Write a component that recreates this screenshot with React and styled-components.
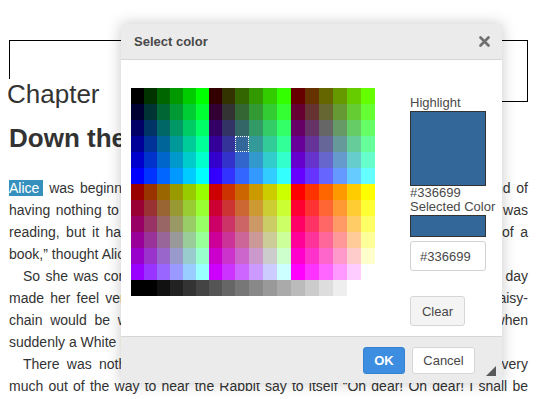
import React from "react";
import styled, { createGlobalStyle } from "styled-components";

const GlobalStyle = createGlobalStyle`
  html, body {
    margin: 0;
    padding: 0;
    background: #fff;
  }
  body {
    font-family: "Liberation Sans", Arial, sans-serif;
    color: #333;
    overflow: hidden;
  }
`;

const Page = styled.div`
  position: relative;
  width: 538px;
  height: 399px;
  overflow: hidden;
  box-sizing: border-box;
  padding: 40px 10px 0 9px;
`;

const Frame = styled.div`
  height: 60px;
  border: 1px solid #000;
`;

const Chapter = styled.h1`
  margin: -23px 0 0 -2px;
  width: 130px;
  background: #fff;
  font-size: 26px;
  font-weight: normal;
  line-height: 30px;
  color: #333;
`;

const Heading = styled.h2`
  margin: 14px 0 24px;
  font-size: 26px;
  font-weight: bold;
  line-height: 30px;
  color: #333;
`;

const Para = styled.p`
  margin: 0;
  font-size: 14px;
  line-height: 22px;
  text-align: justify;
  text-align-last: ${({ $breakJustify }) => ($breakJustify ? "justify" : "auto")};
  text-indent: ${({ $indent }) => ($indent ? "14px" : "0")};
  color: #333;
`;

const Mark = styled.span`
  background: #3590bd;
  color: #fff;
  padding-right: 4px;
`;

const Dialog = styled.div`
  position: absolute;
  left: 121px;
  top: 24px;
  width: 381px;
  background: #fff;
  box-shadow: 0 0 14px rgba(0, 0, 0, 0.22);
  display: flex;
  flex-direction: column;
`;

const TitleBar = styled.div`
  height: 35px;
  border-bottom: 1px solid #d6d6d6;
  background: #ebebeb;
  display: flex;
  align-items: center;
  justify-content: space-between;
  padding: 0 12px 0 13px;
  font-size: 13px;
  font-weight: bold;
  color: #484848;
`;

const CloseButton = styled.span`
  display: flex;
  width: 11px;
  height: 11px;
  margin-top: -1px;
`;

const Body = styled.div`
  height: 276px;
  box-sizing: border-box;
  padding: 28px 16px 0 10px;
  display: flex;
  justify-content: space-between;
  align-items: flex-start;
`;

const Palette = styled.div`
  display: grid;
  grid-template-columns: repeat(8, 13px) repeat(10, 14px);
  grid-auto-rows: 16px;
  width: 244px;
`;

const Cell = styled.div`
  background: ${({ $color }) => $color};
  outline: ${({ $selected }) => ($selected ? "1px dotted #fff" : "none")};
  outline-offset: -1px;
`;

const Side = styled.div`
  width: 76px;
  display: flex;
  flex-direction: column;
  padding-top: 7px;
  font-size: 13px;
  color: #4a4a4a;
`;

const Label = styled.div`
  line-height: ${({ $tight }) => ($tight ? "14px" : "15px")};
  white-space: nowrap;
`;

const Swatch = styled.div`
  height: ${({ $h }) => $h}px;
  margin-top: 1px;
  background: #336699;
  border: 1px solid #333;
  box-sizing: border-box;
`;

const HexInput = styled.div`
  margin-top: 4px;
  height: 30px;
  box-sizing: border-box;
  border: 1px solid #d1d1d1;
  border-radius: 3px;
  padding-left: 9px;
  display: flex;
  align-items: center;
  color: #474747;
`;

const ClearButton = styled.div`
  margin-top: 25px;
  width: 55px;
  height: 30px;
  box-sizing: border-box;
  border: 1px solid #d6d6d6;
  border-radius: 3px;
  background: #f4f4f4;
  display: flex;
  align-items: center;
  justify-content: center;
  color: #474747;
`;

const Footer = styled.div`
  position: relative;
  height: 36px;
  border-top: 1px solid #d6d6d6;
  background: #ebebeb;
  display: flex;
  justify-content: flex-end;
  align-items: flex-start;
  gap: 7px;
  padding: 10px 27px 0 0;
`;

const Button = styled.div`
  width: ${({ $primary }) => ($primary ? "42px" : "63px")};
  height: 27px;
  box-sizing: border-box;
  border-radius: 3px;
  display: flex;
  align-items: center;
  justify-content: center;
  font-size: 13px;
  font-weight: ${({ $primary }) => ($primary ? "bold" : "normal")};
  background: ${({ $primary }) => ($primary ? "#3d8de0" : "#fff")};
  border: 1px solid ${({ $primary }) => ($primary ? "#3583d3" : "#d6d6d6")};
  color: ${({ $primary }) => ($primary ? "#fff" : "#474747")};
`;

const Grip = styled.div`
  position: absolute;
  right: 6px;
  bottom: 7px;
  width: 0;
  height: 0;
  border-style: solid;
  border-width: 0 0 10px 10px;
  border-color: transparent transparent #595959 transparent;
`;

const hex = ["00", "33", "66", "99", "cc", "ff"];

function buildColors() {
  const out = [];
  for (let half = 0; half < 2; half++) {
    for (let b = 0; b < 6; b++) {
      for (let r = 0; r < 3; r++) {
        for (let g = 0; g < 6; g++) {
          out.push("#" + hex[half * 3 + r] + hex[g] + hex[b]);
        }
      }
    }
  }
  out.push("#000000");
  for (let n = 0; n < 16; n++) {
    const c = n.toString(16);
    out.push("#" + c + c + c + c + c + c);
  }
  return out;
}

const colors = buildColors();

function CloseIcon() {
  return (
    <svg width="11" height="11" viewBox="0 0 11 11">
      <path
        d="M1.5 1.5 L9.5 9.5 M9.5 1.5 L1.5 9.5"
        stroke="#6f6f6f"
        strokeWidth="2.6"
        strokeLinecap="round"
      />
    </svg>
  );
}

export default function App() {
  return (
    <>
      <GlobalStyle />
      <Page>
        <Frame />
        <Chapter>Chapter</Chapter>
        <Heading>Down the Rabbit-Hole</Heading>
        <Para>
          <Mark>Alice</Mark> was beginning to get very tired of sitting by her
          sister on the bank, and of having nothing to do: once or twice she had
          peeped into the book her sister was reading, but it had no pictures or
          conversations in it, “and what is the use of a book,” thought Alice
          “without pictures or conversations?”
        </Para>
        <Para $indent>
          So she was considering in her own mind (as well as she could, for the
          hot day made her feel very sleepy and stupid), whether the pleasure of
          making a daisy-chain would be worth the trouble of getting up and
          picking the daisies, when suddenly a White Rabbit with pink eyes ran
          close by her.
        </Para>
        <Para $indent $breakJustify>
          There was nothing so very remarkable in that; nor did Alice think it so
          very
          <br />
          much out of the way to hear the Rabbit say to itself “Oh dear! Oh dear!
          I shall be too late!”
        </Para>

        <Dialog>
          <TitleBar>
            Select color
            <CloseButton>
              <CloseIcon />
            </CloseButton>
          </TitleBar>
          <Body>
            <Palette>
              {colors.map((c, i) => (
                <Cell key={i} $color={c} $selected={i === 3 * 18 + 8} />
              ))}
            </Palette>
            <Side>
              <Label>Highlight</Label>
              <Swatch $h={75} />
              <Label $tight>#336699</Label>
              <Label $tight>Selected Color</Label>
              <Swatch $h={22} />
              <HexInput>#336699</HexInput>
              <ClearButton>Clear</ClearButton>
            </Side>
          </Body>
          <Footer>
            <Button $primary>OK</Button>
            <Button>Cancel</Button>
            <Grip />
          </Footer>
        </Dialog>
      </Page>
    </>
  );
}
